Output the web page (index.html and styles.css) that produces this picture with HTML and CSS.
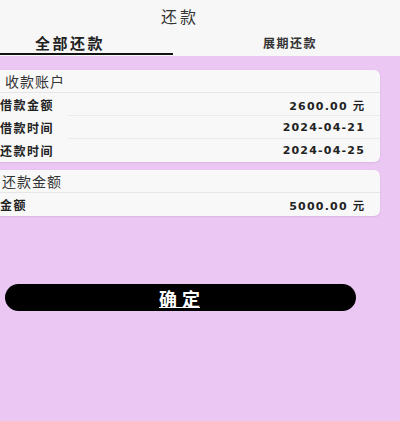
FILE: index.html
```html
<!DOCTYPE html>
<html lang="zh-CN">
<head>
    <meta charset="UTF-8">
    <meta name="viewport" content="width=device-width, initial-scale=1.0">
    <title>还款</title>
    <link rel="stylesheet" href="styles.css">
</head>
<body>
    <div class="header">
        <div class="title">还款</div>
        <div class="tabs">
            <div class="tab active">全部还款</div>
            <div class="tab other">展期还款</div>
        </div>
    </div>
    <div class="main">
        <div class="card">
            <div class="card-head first">收款账户</div>
            <div class="row">
                <span class="label">借款金额</span>
                <span class="value">2600.00 元</span>
            </div>
            <div class="row">
                <span class="label">借款时间</span>
                <span class="value">2024-04-21</span>
            </div>
            <div class="row last">
                <span class="label">还款时间</span>
                <span class="value">2024-04-25</span>
            </div>
        </div>
        <div class="card second">
            <div class="card-head">还款金额</div>
            <div class="row last">
                <span class="label">金额</span>
                <span class="value">5000.00 元</span>
            </div>
        </div>
        <button class="confirm"><span>确</span><span class="last-char">定</span></button>
    </div>
</body>
</html>
```

FILE: styles.css
```css
body {
    margin: 0;
    width: 400px;
    min-height: 421px;
    background: #ebc8f3;
    font-family: "Noto Sans CJK SC", "DejaVu Sans", sans-serif;
    color: #222;
    overflow: hidden;
}
.header {
    background: #f7f7f7;
    height: 56px;
}
.title {
    width: 360px;
    height: 32px;
    line-height: 32px;
    text-align: center;
    font-size: 16px;
    letter-spacing: 3px;
    color: #333;
}
.tabs {
    display: flex;
    height: 24px;
}
.tab {
    text-align: center;
    font-weight: bold;
    line-height: 21px;
}
.tab.active {
    width: 173px;
    padding-right: 33px;
    box-sizing: border-box;
    font-size: 15px;
    letter-spacing: 2.5px;
    border-bottom: 2px solid #111;
    height: 23px;
}
.tab.other {
    flex: 1;
    padding-left: 7px;
    font-size: 12px;
    letter-spacing: 1.5px;
    color: #333;
}
.main {
    padding-top: 14px;
}
.card {
    background: #f8f8f8;
    border-radius: 6px;
    margin: 0 20px 0 -14px;
    box-shadow: 0 1px 2px rgba(120, 80, 130, 0.15);
}
.card.second {
    margin-top: 8px;
}
.card-head {
    height: 23px;
    line-height: 23px;
    padding-left: 16px;
    font-size: 14px;
    letter-spacing: 1px;
    color: #333;
    border-bottom: 1px solid #e6e6e6;
    box-sizing: border-box;
}
.card-head.first {
    padding-left: 19px;
}
.row {
    display: flex;
    justify-content: space-between;
    align-items: center;
    height: 23px;
    padding: 0 15px 0 14px;
    position: relative;
    box-sizing: border-box;
}
.row::after {
    content: "";
    position: absolute;
    left: 82px;
    right: 0;
    bottom: 0;
    border-bottom: 1px solid #ebebeb;
}
.row.last::after {
    display: none;
}
.label {
    font-size: 12px;
    font-weight: bold;
    letter-spacing: 1.5px;
}
.value {
    font-family: "DejaVu Sans", sans-serif;
    font-size: 11px;
    font-weight: bold;
    letter-spacing: 1.2px;
}
.confirm {
    display: block;
    margin: 68px 0 0 5px;
    width: 351px;
    height: 27px;
    border: none;
    border-radius: 14px;
    background: #000;
    color: #fff;
    font-family: "Noto Sans CJK SC", sans-serif;
    font-size: 18px;
    font-weight: bold;
    padding: 0 2px 0 0;
    text-decoration: underline;
}
.confirm span {
    letter-spacing: 5px;
}
.confirm .last-char {
    letter-spacing: 0;
}
```
